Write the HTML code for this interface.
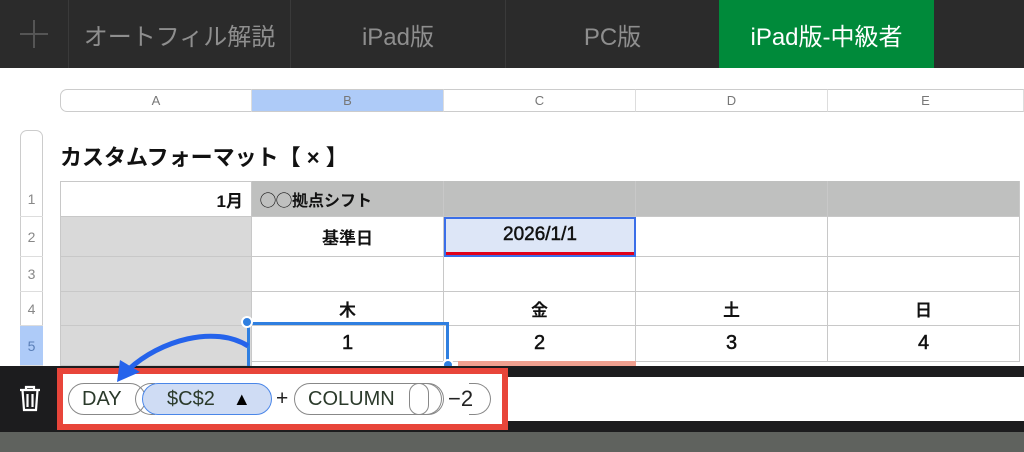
<!DOCTYPE html>
<html><head><meta charset="utf-8"><style>
*{margin:0;padding:0;box-sizing:border-box}
body{width:1024px;height:452px;overflow:hidden;background:#fff;position:relative;font-family:"Liberation Sans","Noto Sans CJK JP",sans-serif}
.a{position:absolute}
.tab{position:absolute;top:0;height:68px;color:#8e8e8e;font-size:24px;display:flex;align-items:center;justify-content:center;border-left:1px solid #3a3a3a}
.ch{position:absolute;top:89px;height:23px;font-size:13px;color:#777;display:flex;align-items:center;justify-content:center;border-right:1px solid #ddd;border-top:1px solid #ccc;border-bottom:1px solid #ccc}
.rh{position:absolute;left:20px;width:23px;font-size:14px;color:#888;display:flex;align-items:center;justify-content:center;border-bottom:1px solid #ddd}
.c{position:absolute;border-right:1px solid #c8c8c8;border-bottom:1px solid #c8c8c8;font-size:17px;font-weight:bold;color:#111;display:flex;align-items:center;justify-content:center}
.n{font-weight:normal;-webkit-text-stroke:0.5px #111;font-size:20px}
.pill{position:absolute;top:383px;height:32px;border:1.5px solid #888;border-radius:16px;font-size:20px;color:#2b3a2b;display:flex;align-items:center;background:#fff}
</style></head><body>
<div class="a" style="left:0;top:0;width:1024px;height:68px;background:#2b2b2b"></div>
<div class="a" style="left:20px;top:33px;width:28px;height:2px;background:#555"></div>
<div class="a" style="left:33px;top:20px;width:2px;height:28px;background:#555"></div>
<div class="tab" style="left:68px;width:222px">オートフィル解説</div>
<div class="tab" style="left:290px;width:215px">iPad版</div>
<div class="tab" style="left:505px;width:214px">PC版</div>
<div class="tab" style="left:719px;width:215px;background:#008a3a;color:#fff;border:none">iPad版-中級者</div>

<div class="ch" style="left:60px;width:192px;border-left:1px solid #ccc;border-radius:7px 0 0 7px">A</div>
<div class="ch" style="left:252px;width:192px;background:#aecbf8">B</div>
<div class="ch" style="left:444px;width:192px">C</div>
<div class="ch" style="left:636px;width:192px">D</div>
<div class="ch" style="left:828px;width:196px">E</div>

<div class="a" style="left:20px;top:130px;width:23px;height:51px;border:1px solid #ccc;border-bottom:none;border-radius:7px 7px 0 0"></div>
<div class="a" style="left:20px;top:181px;width:23px;height:185px;border-left:1px solid #ccc;border-right:1px solid #ccc"></div>
<div class="rh" style="top:181px;height:36px">1</div>
<div class="rh" style="top:217px;height:40px">2</div>
<div class="rh" style="top:257px;height:35px">3</div>
<div class="rh" style="top:292px;height:34px">4</div>
<div class="rh" style="top:326px;height:40px;background:#aecbf8;color:#5a7fb8">5</div>

<div class="a" style="left:60px;top:140px;font-size:22px;font-weight:bold;color:#111">カスタムフォーマット【 × 】</div>

<div class="c" style="left:60px;top:181px;width:192px;height:36px;justify-content:flex-end;padding-right:8px;border-left:1px solid #c8c8c8;border-top:1px solid #c8c8c8">1月</div>
<div class="c" style="left:252px;top:181px;width:192px;height:36px;background:#bfc0bf;justify-content:flex-start;padding-left:8px;font-size:16px">◯◯拠点シフト</div>
<div class="c" style="left:444px;top:181px;width:192px;height:36px;background:#bfc0bf"></div>
<div class="c" style="left:636px;top:181px;width:192px;height:36px;background:#bfc0bf"></div>
<div class="c" style="left:828px;top:181px;width:192px;height:36px;background:#bfc0bf"></div>
<div class="c" style="left:60px;top:217px;width:192px;height:40px;background:#d9d9d9;border-left:1px solid #c8c8c8"></div>
<div class="c" style="left:60px;top:257px;width:192px;height:35px;background:#d9d9d9;border-left:1px solid #c8c8c8"></div>
<div class="c" style="left:60px;top:292px;width:192px;height:34px;background:#d9d9d9;border-left:1px solid #c8c8c8"></div>
<div class="c" style="left:60px;top:326px;width:192px;height:40px;background:#d9d9d9;border-left:1px solid #c8c8c8"></div>
<div class="c" style="left:252px;top:217px;width:192px;height:40px">基準日</div>
<div class="c n" style="left:444px;top:217px;width:192px;height:40px;background:#dde6f7;border:2px solid #3a6ee8;font-size:19px;padding-bottom:4px">2026/1/1</div>
<div class="a" style="left:446px;top:252px;width:188px;height:3px;background:#e0001a"></div>
<div class="c" style="left:636px;top:217px;width:192px;height:40px"></div>
<div class="c" style="left:828px;top:217px;width:192px;height:40px"></div>
<div class="c" style="left:252px;top:257px;width:192px;height:35px"></div>
<div class="c" style="left:444px;top:257px;width:192px;height:35px"></div>
<div class="c" style="left:636px;top:257px;width:192px;height:35px"></div>
<div class="c" style="left:828px;top:257px;width:192px;height:35px"></div>
<div class="c" style="left:252px;top:292px;width:192px;height:34px">木</div>
<div class="c" style="left:444px;top:292px;width:192px;height:34px">金</div>
<div class="c" style="left:636px;top:292px;width:192px;height:34px">土</div>
<div class="c" style="left:828px;top:292px;width:192px;height:34px">日</div>
<div class="c n" style="left:252px;top:326px;width:192px;height:36px">1</div>
<div class="c n" style="left:444px;top:326px;width:192px;height:36px">2</div>
<div class="c n" style="left:636px;top:326px;width:192px;height:36px">3</div>
<div class="c n" style="left:828px;top:326px;width:192px;height:36px">4</div>
<div class="a" style="left:458px;top:361px;width:178px;height:5px;background:#f0a090"></div>
<div class="a" style="left:247px;top:322px;width:202px;height:46px;border:3px solid #2f7fe0;border-bottom:none"></div>
<div class="a" style="left:241px;top:316px;width:12px;height:12px;border-radius:50%;background:#2f7fe0;border:2px solid #fff"></div>
<div class="a" style="left:442px;top:359px;width:12px;height:12px;border-radius:50%;background:#2f7fe0;border:2px solid #fff"></div>

<div class="a" style="left:0;top:366px;width:1024px;height:66px;background:#1c1c1e"></div>
<div class="a" style="left:0;top:432px;width:1024px;height:20px;background:#5f625e"></div>
<div class="a" style="left:508px;top:377px;width:516px;height:44px;background:#fff"></div>
<div class="a" style="left:57px;top:368px;width:451px;height:62px;background:#e8453a"></div>
<div class="a" style="left:63px;top:374px;width:439px;height:50px;background:#fff"></div>
<svg class="a" style="left:18px;top:385px" width="24" height="28" viewBox="0 0 24 28"><g fill="none" stroke="#fff" stroke-width="2.2"><path d="M2 5h20M8 5V2h8v3M4.5 5l1.5 20h12l1.5-20M9.5 9v13M14.5 9v13"/></g></svg>

<div class="pill" style="left:68px;width:78px;padding-left:13px">DAY</div>
<div class="pill" style="left:135px;width:20px;border-right:none;border-radius:16px 0 0 16px;background:transparent"></div>
<div class="pill" style="left:142px;width:130px;background:#cfdcf4;border-color:#4a86e8;padding-left:24px">$C$2<span style="font-size:18px;margin-left:18px;color:#000">▲</span></div>
<div class="a" style="left:276px;top:387px;font-size:21px;color:#222">+</div>
<div class="pill" style="left:294px;width:150px;padding-left:13px">COLUMN</div>
<div class="pill" style="left:409px;width:20px;border-radius:16px"></div>
<div class="pill" style="left:418px;width:24px;border-left:none;border-radius:0 16px 16px 0;background:transparent"></div>
<div class="a" style="left:448px;top:386px;font-size:22px;color:#222">−2</div>
<div class="pill" style="left:469px;width:22px;border-left:none;border-radius:0 16px 16px 0;background:transparent"></div>

<svg class="a" style="left:0;top:0" width="1024" height="452"><path d="M248 346 C215 325 160 340 128 370" fill="none" stroke="#2563eb" stroke-width="5"/><path d="M117 382 L120 360 L140 372 Z" fill="#2563eb"/></svg>
</body></html>
